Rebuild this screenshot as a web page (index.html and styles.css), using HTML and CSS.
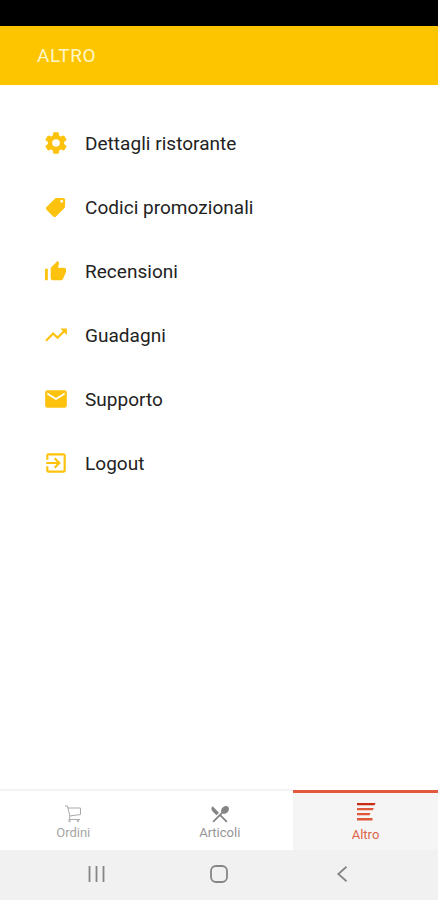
FILE: index.html
```
<!DOCTYPE html>
<html lang="it">
<head>
  <meta charset="utf-8">
  <title>Altro</title>
  <link rel="stylesheet" href="styles.css">
</head>
<body>
  <div class="screen">
    <div class="status-bar"></div>
    <header class="header">ALTRO</header>

    <main class="menu">
      <a class="menu-item">
        <svg class="icon" viewBox="0 0 24 24"><path d="M19.400 13c0-.3.1-.7.1-1s0-.7-.1-1l2.100-1.650c.2-.15.25-.4.120-.640l-2-3.460c-.12-.22-.38-.3-.6-.22l-2.500 1c-.52-.4-1.080-.730-1.700-.980l-.380-2.650A.5.500 0 0 0 14 2h-4a.5.500 0 0 0-.49.420l-.380 2.650c-.61.250-1.170.590-1.690.980l-2.490-1c-.23-.09-.49 0-.61.220l-2 3.460c-.13.220-.07.490.12.640L4.570 11c-.04.330-.07.660-.07 1s.030.670.070 1l-2.110 1.650c-.19.150-.24.420-.12.640l2 3.460c.12.220.38.300.61.220l2.490-1c.52.400 1.080.730 1.690.980l.380 2.650c.03.240.24.420.49.420h4c.25 0 .46-.18.490-.42l.380-2.650c.61-.25 1.170-.59 1.700-.98l2.500 1c.22.090.48 0 .6-.22l2-3.460c.12-.22.07-.49-.12-.64L19.400 13zM12 15.500a3.500 3.500 0 1 1 0-7 3.500 3.500 0 0 1 0 7z"/></svg>
        <span>Dettagli ristorante</span>
      </a>
      <a class="menu-item">
        <svg class="icon icon-small" viewBox="0 0 24 24"><path d="M2.590 11.580l9-9C11.950 2.220 12.450 2 13 2h7a2 2 0 0 1 2 2v7c0 .55-.22 1.050-.59 1.420l-9 9c-.36.360-.86.580-1.410.580s-1.050-.22-1.410-.59l-7-7C2.220 14.050 2 13.550 2 13s.230-1.060.590-1.420zM18.500 7a1.500 1.500 0 1 0 0-3 1.500 1.500 0 0 0 0 3z"/></svg>
        <span>Codici promozionali</span>
      </a>
      <a class="menu-item">
        <svg class="icon icon-small" viewBox="0 0 24 24"><path d="M1 21h3V9H1v12zm22-11c0-1.100-.9-2-2-2h-6.310l.950-4.570.030-.32c0-.41-.17-.79-.44-1.060L14.170 1 7.590 7.590C7.220 7.950 7 8.450 7 9v10c0 1.100.9 2 2 2h9c.83 0 1.540-.5 1.840-1.220l3.020-7.050c.09-.23.140-.47.140-.73v-2z"/></svg>
        <span>Recensioni</span>
      </a>
      <a class="menu-item">
        <svg class="icon" viewBox="0 0 24 24"><path d="M16 6l2.290 2.290-4.880 4.880-4-4L2 16.590 3.410 18l6-6 4 4 6.300-6.290L22 12V6z"/></svg>
        <span>Guadagni</span>
      </a>
      <a class="menu-item">
        <svg class="icon" viewBox="0 0 24 24"><path d="M20 4H4c-1.100 0-2 .9-2 2v12c0 1.100.9 2 2 2h16c1.100 0 2-.9 2-2V6c0-1.100-.9-2-2-2zm0 4l-8 5-8-5V6l8 5 8-5v2z"/></svg>
        <span>Supporto</span>
      </a>
      <a class="menu-item">
        <svg class="icon" viewBox="0 0 24 24"><path d="M10.090 15.590L11.500 17l5-5-5-5-1.410 1.410L12.670 11H3v2h9.670l-2.580 2.590zM19 3H5a2 2 0 0 0-2 2v4h2V5h14v14H5v-4H3v4a2 2 0 0 0 2 2h14c1.100 0 2-.9 2-2V5c0-1.100-.9-2-2-2z"/></svg>
        <span>Logout</span>
      </a>
    </main>

    <nav class="tabs">
      <a class="tab">
        <svg class="tab-icon cart" viewBox="0 0 20 20"><path d="M2 2h2.500l2.500 10.500M4.800 4h12.700v6.500L6.500 12M7 12.500L6 15.500h11"/><circle cx="6.500" cy="17" r=".8"/><circle cx="15" cy="17" r=".8"/></svg>
        <span>Ordini</span>
      </a>
      <a class="tab tab-dark">
        <svg class="tab-icon" viewBox="1 1 22 22"><path d="M8.100 13.340l2.830-2.830L3.910 3.500a4 4 0 0 0 0 5.660l4.190 4.180zm6.780-1.810c1.530.710 3.680.210 5.270-1.380 1.910-1.910 2.280-4.650.810-6.120-1.460-1.460-4.200-1.100-6.120.810-1.590 1.590-2.090 3.740-1.380 5.270L3.700 19.870l1.410 1.410L12 14.410l6.880 6.880 1.410-1.410L13.410 13l1.470-1.470z"/></svg>
        <span>Articoli</span>
      </a>
      <a class="tab active">
        <svg class="tab-icon" viewBox="0 0 20 20"><path class="first-line" d="M1 1h18.500l-1 2.300H1z"/><path d="M1 6h16.800l-1 2.300H1zM1 11h13.500l-1 2.300H1zM1 16h15.500v2.500H1z"/></svg>
        <span>Altro</span>
      </a>
    </nav>

    <div class="system-nav">
      <svg viewBox="0 0 20 20"><path d="M3.500 2v16M10.500 2v16M17.500 2v16"/></svg>
      <svg viewBox="0 0 20 20"><rect x="2" y="2" width="16" height="16" rx="5"/></svg>
      <svg viewBox="0 0 20 20"><path d="M14.500 2.800L6.300 10l8.200 7.200"/></svg>
    </div>
  </div>
</body>
</html>
```
FILE: styles.css
```
body {
  margin: 0;
  font-family: Roboto, Arial, sans-serif;
  background-color: #fff;
}
.screen {
  display: flex;
  flex-direction: column;
  height: 900px;
  overflow: hidden;
}
.status-bar {
  height: 26px;
  background-color: #000;
}
.header {
  height: 59px;
  line-height: 60px;
  padding-left: 37px;
  background-color: #fdc500;
  color: #fff6c8;
  font-size: 19px;
  letter-spacing: 0.6px;
}
.menu {
  flex: 1;
  padding: 26px 0 0 43px;
}
.menu-item {
  display: flex;
  align-items: center;
  gap: 16px;
  height: 64px;
  color: #222;
  font-size: 19px;
  letter-spacing: 0.03px;
}
.icon {
  width: 26px;
  height: 26px;
  fill: #fcc20d;
}
.icon-small {
  width: 23px;
  height: 23px;
  margin: 0 2px 0 1px;
}
.tabs {
  display: flex;
  height: 61px;
}
.tab {
  flex: 1;
  display: flex;
  flex-direction: column;
  align-items: center;
  box-sizing: border-box;
  padding-top: 13px;
  border-top: 2px solid #f4f4f4;
  color: #a5a5a5;
  font-size: 13px;
  line-height: 16px;
}
.tab-icon {
  width: 20px;
  height: 20px;
  margin-bottom: 1px;
  fill: #858585;
}
.cart {
  fill: none;
  stroke: #aaa;
  stroke-width: 1;
}
.tab-dark {
  color: #959595;
}
.active {
  flex: 0 0 145px;
  margin-top: 1px;
  padding-top: 9px;
  border-top: 3px solid #e2593d;
  background-color: #f5f5f5;
  color: #dc6447;
}
.active .tab-icon {
  fill: #e0583a;
  margin-bottom: 5px;
}
.active .first-line {
  fill: #c92c16;
}
.system-nav {
  display: flex;
  justify-content: space-between;
  height: 50px;
  box-sizing: border-box;
  padding: 14px 86px 0;
  background-color: #f1f1f1;
}
.system-nav svg {
  width: 20px;
  height: 20px;
  fill: none;
  stroke: #858585;
  stroke-width: 1.8;
}
```
